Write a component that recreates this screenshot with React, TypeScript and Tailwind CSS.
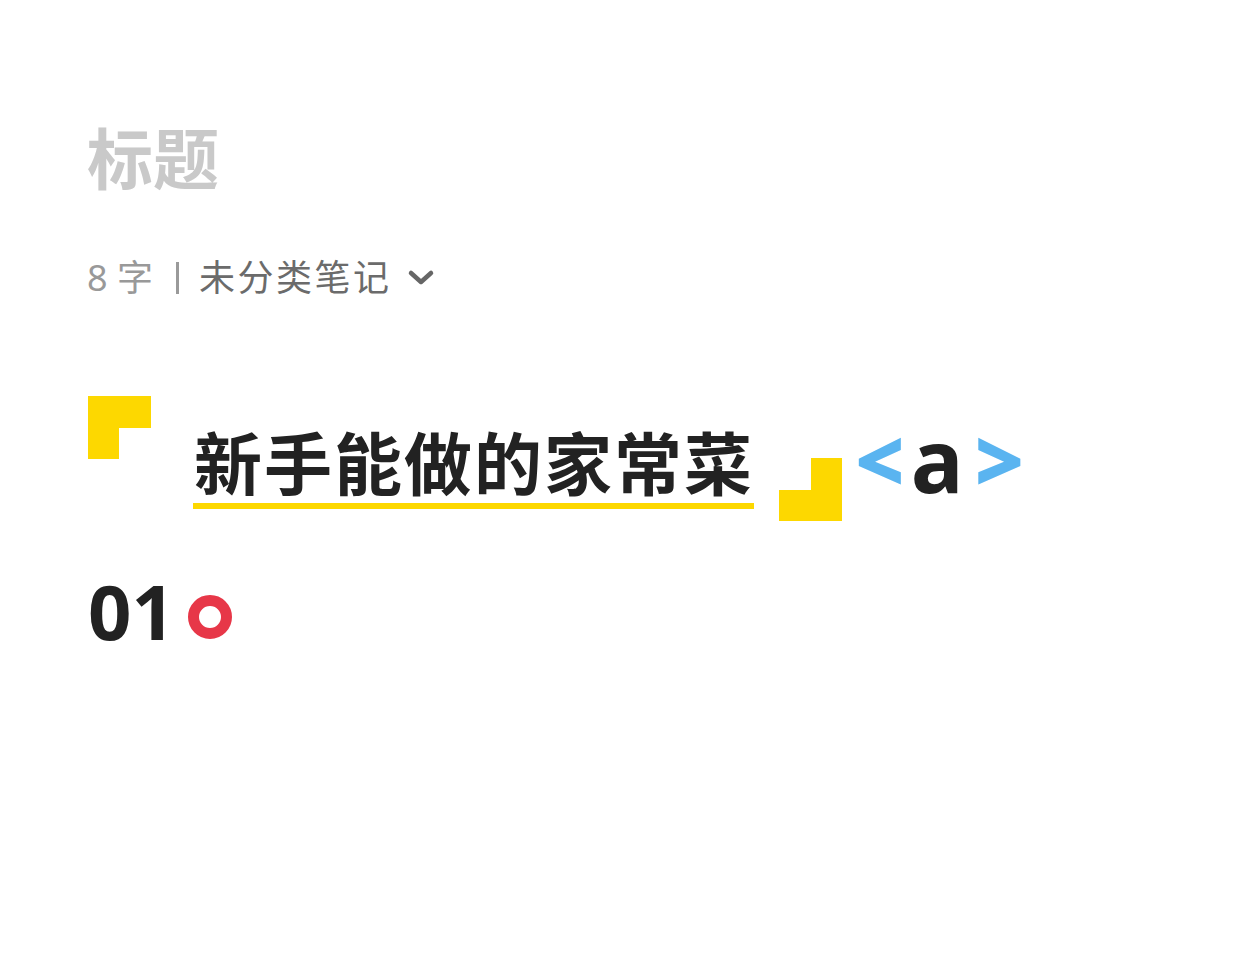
export default function App() {
  return (
    <div
      className="min-h-screen bg-white pl-[87px] pt-[125px]"
      style={{ fontFamily: '"Noto Sans", "Noto Sans CJK SC", sans-serif' }}
    >
      {/* Title placeholder */}
      <h1 className="text-[66px] font-bold leading-none text-[#c9c9c9]">标题</h1>

      {/* Meta row */}
      <div className="mt-[69px] flex items-center text-[36px] leading-none">
        <span className="text-[#999999]">8 字</span>
        <span className="ml-[23px] mr-[20px] h-[32px] w-[3px] bg-[#9a9a9a]" />
        <span className="tracking-[2.5px] text-[#6b6b6b]">未分类笔记</span>
        <svg
          className="ml-[16px]"
          width="28"
          height="20"
          viewBox="0 0 28 20"
          fill="none"
          stroke="#666"
          strokeWidth="4.5"
          strokeLinecap="round"
          strokeLinejoin="round"
        >
          <path d="M4 5l10 9 10-9" />
        </svg>
      </div>

      {/* Heading block */}
      <div className="mt-[100px] flex items-start">
        <div className="ml-[1px] h-[63px] w-[63px] border-l-[31px] border-t-[32px] border-[#fdd800]" />
        <h2 className="ml-[42px] mt-[34px] border-b-[6px] border-[#fdd800] pb-[5px] pl-[1px] text-[68px] font-bold leading-none tracking-[2px] text-[#222222]">
          新手能做的家常菜
        </h2>
        <div className="ml-[25px] mt-[62px] h-[63px] w-[63px] border-b-[31px] border-r-[31px] border-[#fdd800]" />
        <div className="ml-[13px] mt-[19px] flex items-center leading-none">
          <span className="text-[85px] font-black text-[#5ab4f0]">&lt;</span>
          <span className="ml-[6px] text-[88px] font-bold text-[#222222]">a</span>
          <span className="ml-[11px] text-[85px] font-black text-[#5ab4f0]">&gt;</span>
        </div>
      </div>

      {/* Step number */}
      <div className="mt-[52px] flex items-start">
        <span className="ml-[1px] text-[76px] font-bold leading-none text-[#222222]">01</span>
        <span className="ml-[13px] mt-[22px] h-[44px] w-[44px] rounded-full border-[11px] border-[#e73748]" />
      </div>
    </div>
  );
}
